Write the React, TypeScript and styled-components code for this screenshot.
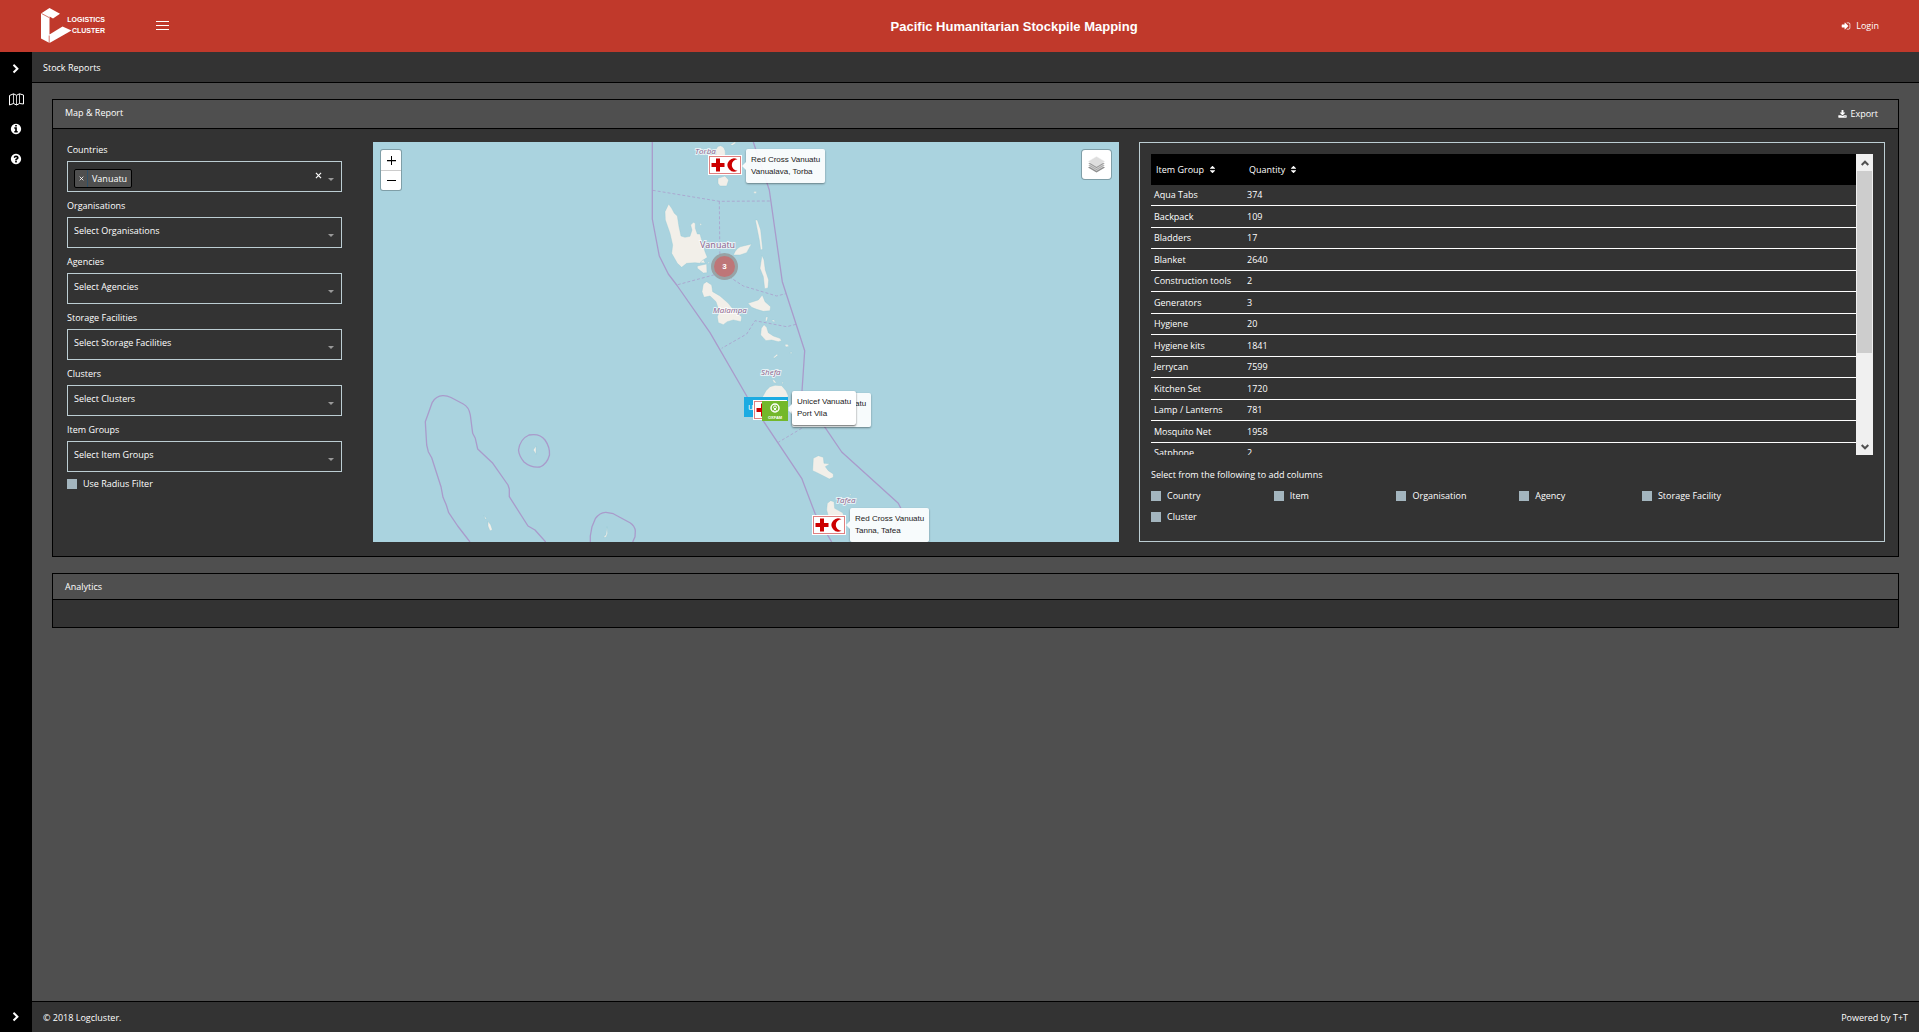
import React from 'react';
import styled, { createGlobalStyle } from 'styled-components';

const colors = {
  brand: '#c0392b',
  page: '#4f4f4f',
  panel: '#333333',
  line: '#000000',
  field: '#bccdd3',
  tick: '#a3b5be',
  water: '#aad3df',
  land: '#f2efe9',
  boundary: '#a99bcb',
};

const GlobalStyle = createGlobalStyle`
  *, *::before, *::after { box-sizing: border-box; }
  body {
    margin: 0;
    background: ${colors.page};
    color: #fff;
    font: 9px/16px 'Open Sans', 'Noto Sans', sans-serif;
  }
  button, select, input { font: inherit; color: inherit; }
  button { background: none; border: 0; padding: 0; cursor: pointer; }
  h1, h2, p { margin: 0; font: inherit; }
`;

/* ---------- icons ---------- */

const iconPaths = {
  chevron:
    'M1363 877l-742 742q-19 19-45 19t-45-19l-166-166q-19-19-19-45t19-45l531-531-531-531q-19-19-19-45t19-45l166-166q19-19 45-19t45 19l742 742q19 19 19 45t-19 45z',
  info:
    'M1152 1376v-160q0-14-9-23t-23-9h-96v-512q0-14-9-23t-23-9h-320q-14 0-23 9t-9 23v160q0 14 9 23t23 9h96v320h-96q-14 0-23 9t-9 23v160q0 14 9 23t23 9h448q14 0 23-9t9-23zm-128-896v-160q0-14-9-23t-23-9h-192q-14 0-23 9t-9 23v160q0 14 9 23t23 9h192q14 0 23-9t9-23zm640 416q0 209-103 385.5t-279.5 279.5-385.5 103-385.5-103-279.5-279.5-103-385.5 103-385.5 279.5-279.5 385.5-103 385.5 103 279.5 279.5 103 385.5z',
  question:
    'M1024 1376v-192q0-14-9-23t-23-9h-192q-14 0-23 9t-9 23v192q0 14 9 23t23 9h192q14 0 23-9t9-23zm256-672q0-88-55.5-163t-138.5-116-170-41q-243 0-371 213-15 24 8 42l132 100q7 6 19 6 16 0 25-12 53-68 86-92 34-24 86-24 48 0 85.5 26t37.5 59q0 38-20 61t-68 45q-63 28-115.5 86.5t-52.5 125.5v36q0 14 9 23t23 9h192q14 0 23-9t9-23q0-19 21.5-49.5t54.5-49.5q32-18 49-28.5t46-35 44.5-48 28-60.5 12.5-81zm384 192q0 209-103 385.5t-279.5 279.5-385.5 103-385.5-103-279.5-279.5-103-385.5 103-385.5 279.5-279.5 385.5-103 385.5 103 279.5 279.5 103 385.5z',
  download:
    'M1344 1344q0-26-19-45t-45-19-45 19-19 45 19 45 45 19 45-19 19-45zm256 0q0-26-19-45t-45-19-45 19-19 45 19 45 45 19 45-19 19-45zm128-224v320q0 40-28 68t-68 28h-1472q-40 0-68-28t-28-68v-320q0-40 28-68t68-28h465l135 136q58 56 136 56t136-56l136-136h464q40 0 68 28t28 68zm-325-569q17 41-14 70l-448 448q-18 19-45 19t-45-19l-448-448q-31-29-14-70 17-39 59-39h256v-448q0-26 19-45t45-19h256q26 0 45 19t19 45v448h256q42 0 59 39z',
  signIn:
    'M1312 896q0 26-19 45l-544 544q-19 19-45 19t-45-19-19-45v-288h-448q-26 0-45-19t-19-45v-384q0-26 19-45t45-19h448v-288q0-26 19-45t45-19 45 19l544 544q19 19 19 45zm352-352v704q0 119-84.5 203.5t-203.5 84.5h-320q-13 0-22.5-9.5t-9.5-22.5q0-4-1-20t-.5-26.5 3-23.5 10-19.5 20.5-6.5h320q66 0 113-47t47-113v-704q0-66-47-113t-113-47h-312l-11.5-1-11.5-3-8-5.5-7-9-2-13.5q0-4-1-20t-.5-26.5 3-23.5 10-19.5 20.5-6.5h320q119 0 203.5 84.5t84.5 203.5z',
  sort:
    'M1408 1088q0 26-19 45l-448 448q-19 19-45 19t-45-19l-448-448q-19-19-19-45t19-45 45-19h896q26 0 45 19t19 45zm0-384q0 26-19 45t-45 19h-896q-26 0-45-19t-19-45 19-45l448-448q19-19 45-19t45 19l448 448q19 19 19 45z',
};

const Icon = ({ name, size }: { name: keyof typeof iconPaths; size: number }) => (
  <svg width={size} height={size} viewBox="0 0 1792 1792" fill="currentColor" aria-hidden="true">
    <path d={iconPaths[name]} />
  </svg>
);

const MapIcon = () => (
  <svg width="15" height="13" viewBox="0 0 15 13" fill="none" stroke="#fff" strokeWidth="1" aria-hidden="true">
    <path d="M.5 2.500L4.500.800 7.500 2.300 10.500.800 14.500 2V11L10.500 10.500 7.500 12 4.500 10.500.500 12Z" strokeLinejoin="round" />
    <path d="M4.500 1V10.500M7.500 2.500V12M10.500 1V10.500" strokeWidth=".8" />
  </svg>
);

const CrossIcon = ({ size }: { size: number }) => (
  <svg width={size} height={size} viewBox="0 0 6 6" stroke="currentColor" strokeWidth="1" aria-hidden="true">
    <path d="M.8.800L5.200 5.200M5.200.800L.8 5.200" />
  </svg>
);

/* ---------- page frame ---------- */

const Page = styled.div`
  min-height: 100vh;
  display: flex;
  flex-direction: column;
`;

const TopBar = styled.header`
  height: 52px;
  background: ${colors.brand};
  display: flex;
  align-items: center;
  padding: 0 40px;
`;

const Brand = styled.div`
  display: flex;
  align-items: center;
  gap: 51px;
  padding-right: 18px;
`;

const Logo = styled.a`
  display: flex;
  align-items: center;
  color: #fff;
  text-decoration: none;
`;

const LogoText = styled.span`
  font: bold 7px/11px 'Liberation Sans Narrow', 'Liberation Sans', sans-serif;
  text-align: right;
  width: 38px;
  margin-left: -5px;
  padding-bottom: 2px;
`;

const MenuButton = styled.button`
  display: flex;
`;

const AppTitle = styled.h1`
  flex: 1;
  padding-top: 1px;
  text-align: center;
  font: bold 13px/20px 'Liberation Sans', Arial, sans-serif;
`;

const LoginLink = styled.a`
  display: flex;
  align-items: center;
  gap: 5px;
  color: #fff;
  text-decoration: none;
`;

const Shell = styled.div`
  flex: 1;
  display: flex;
`;

const SideBar = styled.nav`
  width: 32px;
  background: #000;
  display: flex;
  flex-direction: column;
  align-items: center;
  justify-content: space-between;
  padding: 2px 0 0;
`;

const SideGroup = styled.div`
  display: flex;
  flex-direction: column;
`;

const SideButton = styled.button`
  width: 32px;
  height: 30px;
  display: flex;
  align-items: center;
  justify-content: center;
`;

const Main = styled.div`
  flex: 1;
  min-width: 0;
  display: flex;
  flex-direction: column;
`;

const SubHeader = styled.div`
  height: 31px;
  padding: 1px 11px 0;
  display: flex;
  align-items: center;
  background: ${colors.panel};
  border-bottom: 1px solid ${colors.line};
`;

const Content = styled.main`
  flex: 1;
  padding: 16px 20px;
  display: flex;
  flex-direction: column;
  gap: 16px;
`;

const Footer = styled.footer`
  height: 31px;
  padding: 1px 11px 0;
  display: flex;
  align-items: center;
  justify-content: space-between;
  background: ${colors.panel};
  border-top: 1px solid ${colors.line};
`;

const Panel = styled.section`
  border: 1px solid ${colors.line};
  background: ${colors.panel};
`;

const PanelHead = styled.div`
  padding: 0 20px 0 12px;
  display: flex;
  align-items: flex-start;
  justify-content: space-between;
  background: ${colors.page};
  border-bottom: 1px solid ${colors.line};
`;

const PanelTitle = styled.h2`
  line-height: 25px;
`;

const ExportButton = styled.button`
  height: 28px;
  display: flex;
  align-items: center;
  gap: 3px;
`;

const PanelBody = styled.div`
  display: grid;
  grid-template-columns: minmax(0, 286px) minmax(0, 1fr) minmax(0, 1fr);
  gap: 20px;
  padding: 13px 13px 14px 14px;
`;

const EmptyBody = styled.div`
  height: 27px;
`;

/* ---------- filters ---------- */

const Filters = styled.form`
  display: flex;
  flex-direction: column;
  padding-right: 11px;
`;

const FilterLabel = styled.label`
  height: 16px;
  line-height: 15px;
  margin-bottom: 3px;
`;

const SelectShell = styled.div`
  position: relative;
  height: 31px;
  margin-bottom: 6px;
  display: flex;
  align-items: center;
  border: 1px solid ${colors.field};

  &::after {
    content: '';
    position: absolute;
    right: 7px;
    top: 16px;
    border: 3px solid transparent;
    border-top-color: #999;
    border-bottom: 0;
    pointer-events: none;
  }
`;

const Select = styled.select`
  appearance: none;
  flex: 1;
  min-width: 0;
  height: 100%;
  padding: 0 16px 4px 6px;
  background: transparent;
  border: 0;
  outline: 0;

  option { background: ${colors.panel}; }
`;

const Tag = styled.span`
  height: 19px;
  margin: 3px 0 0 6px;
  display: flex;
  align-items: center;
  background: ${colors.page};
  border: 1px solid #000;
  border-radius: 2px;
`;

const TagRemove = styled.button`
  width: 13px;
  height: 17px;
  display: flex;
  align-items: center;
  justify-content: center;
  border-right: 1px solid #2f5068;
`;

const TagText = styled.span`
  padding: 2px 4px 0;
`;

const ClearButton = styled.button`
  height: 16px;
  margin: 0 19px 2px 0;
  display: flex;
  align-items: center;
`;

const Check = styled.label`
  display: flex;
  align-items: center;
  gap: 6px;
  height: 12px;
  line-height: 12px;
`;

const CheckBox = styled.input`
  appearance: none;
  width: 10px;
  height: 10px;
  margin: 0;
  background: ${colors.tick};

  &:checked { box-shadow: inset 0 0 0 3px #fff; }
`;

const filterNames = ['Organisations', 'Agencies', 'Storage Facilities', 'Clusters', 'Item Groups'];

const FilterForm = () => (
  <Filters>
    <FilterLabel htmlFor="countries">Countries</FilterLabel>
    <SelectShell>
      <Tag>
        <TagRemove type="button" aria-label="Remove"><CrossIcon size={5} /></TagRemove>
        <TagText>Vanuatu</TagText>
      </Tag>
      <Select id="countries" defaultValue=""><option value="" /></Select>
      <ClearButton type="button" aria-label="Clear"><CrossIcon size={7} /></ClearButton>
    </SelectShell>
    {filterNames.map((name) => (
      <React.Fragment key={name}>
        <FilterLabel htmlFor={name}>{name}</FilterLabel>
        <SelectShell>
          <Select id={name}><option>Select {name}</option></Select>
        </SelectShell>
      </React.Fragment>
    ))}
    <Check><CheckBox type="checkbox" />Use Radius Filter</Check>
  </Filters>
);

/* ---------- map ---------- */

const MapFrame = styled.div`
  position: relative;
  height: 400px;
  overflow: hidden;
  background: ${colors.water};
`;

const MapCanvas = styled.div`
  position: absolute;
  top: 0;
  left: 50%;
  width: 746px;
  height: 400px;
  margin-left: -373px;
`;

const MapDrawing = styled.svg`
  display: block;

  text {
    fill: #8d618b;
    stroke: #fff;
    stroke-width: 2px;
    stroke-opacity: 0.7;
    paint-order: stroke;
    font: italic 8px 'Open Sans', 'Noto Sans', sans-serif;
  }
  .country {
    font: 9px 'Open Sans', 'Noto Sans', sans-serif;
  }
`;

const Pin = styled.div<{ $x: number; $y: number }>`
  position: absolute;
  left: ${(p) => p.$x}px;
  top: ${(p) => p.$y}px;
  display: flex;
`;

const Cluster = styled.button`
  width: 27px;
  height: 27px;
  border-radius: 50%;
  border: 3px solid #98a3a6;
  background: #be7678;
  color: #fff;
  font: bold 8px/12px 'Liberation Sans', Arial, sans-serif;
`;

const UnicefBadge = styled.div`
  width: 44px;
  height: 20px;
  padding: 2px 4px;
  background: #1cabe2;
  color: #fff;
`;

const Callout = styled.div<{ $solid?: boolean }>`
  position: relative;
  padding: 5px;
  border-radius: 2px;
  background: ${(p) => (p.$solid ? '#fff' : 'rgba(255, 255, 255, 0.9)')};
  box-shadow: 0 1px 2px rgba(0, 0, 0, ${(p) => (p.$solid ? 0.6 : 0.4)});
  color: #222;
  white-space: nowrap;
  font: 8px/12px 'Liberation Sans', Arial, sans-serif;

  &::before {
    content: '';
    position: absolute;
    left: -4px;
    top: 13px;
    border: 4px solid transparent;
    border-left: 0;
    border-right-color: #f8fbfc;
  }
`;

const MapButtons = styled.div`
  position: absolute;
  left: 8px;
  top: 8px;
  width: 20px;
  background: #fff;
  border-radius: 2px;
  box-shadow: 0 0 0 1px rgba(0, 0, 0, 0.25);
`;

const ZoomButton = styled.button`
  width: 20px;
  height: 20px;
  display: flex;
  align-items: center;
  justify-content: center;

  & + & { border-top: 1px solid #ccc; }
`;

const LayersButton = styled.button`
  position: absolute;
  right: 8px;
  top: 8px;
  width: 29px;
  height: 29px;
  display: flex;
  align-items: center;
  justify-content: center;
  background: #fff;
  border-radius: 3px;
  box-shadow: 0 0 0 1px rgba(0, 0, 0, 0.25);
`;

const RedCross = () => (
  <svg width="34" height="20" viewBox="0 0 34 20" aria-hidden="true">
    <rect width="34" height="20" fill="#fff" />
    <rect x="1.500" y="1.500" width="31" height="17" fill="#fff" stroke="#e08080" />
    <path d="M8 3.500h4v4.500h4.500v4H12v4.500H8V12H3.500V8H8z" fill="#c00" />
    <path d="M29.500 4.300A6.600 6.600 0 1 0 29.500 15.700A5.200 5.200 0 1 1 29.500 4.300Z" fill="#c00" />
  </svg>
);

const Oxfam = () => (
  <svg width="26" height="20" viewBox="0 0 26 20" role="img" aria-label="Oxfam">
    <rect width="26" height="20" fill="#73b82b" />
    <circle cx="13" cy="7" r="4" fill="none" stroke="#fff" strokeWidth="1.500" />
    <circle cx="13" cy="6.300" r="1.400" fill="none" stroke="#fff" strokeWidth="1" />
    <path d="M11.500 9.800L13 7.800 14.500 9.800" fill="none" stroke="#fff" strokeWidth="1" />
    <text x="13" y="17.500" fill="#fff" textAnchor="middle" fontFamily="Liberation Sans" fontWeight="bold" fontSize="4">OXFAM</text>
  </svg>
);

const Islands = () => (
  <MapDrawing width="746" height="400" viewBox="0 0 746 400" aria-hidden="true">
    <g fill="none" stroke={colors.boundary} strokeWidth="1.300" strokeLinejoin="round">
      <path d="M279.300 0V77L286.300 114 295.300 132 303.700 143 337 190.700 374.300 255 428.700 336.300 442 371.300 458.700 400" />
      <path d="M380.300 0L396.300 48 409.300 139.700 425 188 431.700 208.700 429 249 430 255 452.700 286.300 468.700 310 525.300 361.300 528.700 368 517 400" />
      <path d="M97 400L84.700 384 75.700 370.700 73.300 363 70 355.300 68 344.700 58.700 315.700 55.300 309.700 53.700 303 52.300 279.700 59.300 260.300Q63 254 69.700 253.700Q74 253.500 78 255.500L90.300 262Q96 265 97.300 273L99.700 291.300 102.300 296.300 104.700 307 119.300 320.700 135 343 136.300 347V354.700L155 384 162 388 172.700 400" />
      <path d="M145.500 308Q147 297 156 293Q167 291 172 298Q177 305 176.500 313Q174 322 167 325Q158 326 151 320Q146 314 145.500 308Z" />
      <path d="M217.300 400V394L219 384.700 222.300 376.700Q227 370 233 370.300L240.300 371.700 257 380.700Q262 384 262.300 389L262 394.700 259.700 400" />
      <g strokeDasharray="3 2" strokeWidth="1" opacity=".75">
        <path d="M279.700 48.300L346.300 59.300 397 59M346.300 59.300L347 125M304.700 142.700L346 131.500M352 132L370.300 144 403.700 154 412.700 151.700M423 182.300L413.700 184.700 382 178.700 373.700 192 348.700 206.300M428.700 286.300L405.300 300.300" />
      </g>
    </g>
    <g fill={colors.land} stroke="#8cc4d0" strokeWidth="1" strokeLinejoin="round">
      <g transform="translate(267 -12) scale(.3333)">
        <path d="M86 222L95 235 103 250 112 258 117 290 123 318 135 322 150 319 156 300 152 285 160 277 166 280 166 295 172 312 180 312 188 340 195 365 202 382 190 390 182 400 165 398 140 400 125 412 112 400 95 370 98 345 90 310 76 270 75 245Z" />
        <path d="M172 408L200 402 201 428 190 429 172 415ZM180 398L190 389 196 399ZM178 280L186 282 182 287ZM203 397L208 396 207 401Z" />
        <path d="M280 375Q290 350 310 348L335 342 330 350 320 368 300 375Z" />
        <path d="M346 270L352 270 362 300 368 358 362 360 358 330 352 300Z" />
        <path d="M366 376L372 390 376 420 386 450 384 474 374 476 370 440 360 415Z" />
        <path d="M190 462L200 455 215 465 218 485 240 498 265 520 285 545 305 560 303 575 290 572 280 570 262 575 250 584 235 578 232 560 238 545 228 515 210 498 192 502 186 485Z" />
        <path d="M324 520L355 510 367 495 375 515 392 530 390 542 370 544 350 538 335 532Z" />
        <path d="M378 560L384 562 380 574 376 572ZM395 571Q400 568 406 573 400 578 395 571Z" />
        <path d="M228 70Q226 48 242 47Q256 52 256 70V82H228ZM234 145L255 138 266 150 260 168 240 168 234 160ZM270 44L284 36 289 38 278 46ZM340 187Q345 181 351 187 345 194 340 187Z" />
      </g>
      <g transform="translate(267 178) scale(.3333)">
        <path d="M372 14L380 22 385 38 400 48 420 55 425 62 415 65 395 60 378 62 362 45 364 25Z" />
        <path d="M434 76Q440 69 447 77 440 85 434 76ZM448 98L456 96 455 101ZM400 112L410 103 415 105 402 115ZM396 178L403 180 410 190 402 188ZM424 188L430 186 429 192Z" />
        <path d="M368 230L378 212 390 200 405 196 425 197 438 212 445 228 440 240H372Z" />
        <path d="M520 415L535 407 550 412 552 430 570 431 556 440 565 452 580 462 580 472 568 477 545 465 525 455 518 452Z" />
        <path d="M562 550L572 542 582 545 584 565 608 578 612 588H565L560 570ZM627 526L631 521 634 526Z" />
      </g>
      <g transform="translate(-3 -12) scale(.3333)">
        <path d="M498 948L490 960 498 973ZM342 1156L350 1166 346 1168ZM354 1174L362 1184 367 1199 360 1203 354 1188ZM711 1190L713 1210 708 1222 700 1222 708 1214Z" />
      </g>
    </g>
    <text x="322" y="12">Torba</text>
    <text className="country" x="327" y="106">Vanuatu</text>
    <text x="340" y="171">Malampa</text>
    <text x="388" y="233">Shefa</text>
    <text x="463" y="361">Tafea</text>
  </MapDrawing>
);

const StockMap = () => (
  <MapFrame>
    <MapCanvas>
      <Islands />
      <Pin $x={335} $y={13}><RedCross /></Pin>
      <Pin $x={439} $y={373}><RedCross /></Pin>
      <Pin $x={338} $y={111}><Cluster type="button">3</Cluster></Pin>
      <Pin $x={371} $y={255}><UnicefBadge>unicef</UnicefBadge></Pin>
      <Pin $x={380} $y={258}><RedCross /></Pin>
      <Pin $x={389} $y={259}><Oxfam /></Pin>
      <Pin $x={373} $y={7}><Callout>Red Cross Vanuatu<br />Vanualava, Torba</Callout></Pin>
      <Pin $x={477} $y={366}><Callout>Red Cross Vanuatu<br />Tanna, Tafea</Callout></Pin>
      <Pin $x={419} $y={251}><Callout>Red Cross Vanuatu<br />Port Vila</Callout></Pin>
      <Pin $x={419} $y={249}><Callout $solid>Unicef Vanuatu<br />Port Vila</Callout></Pin>
    </MapCanvas>
    <MapButtons>
      <ZoomButton type="button" aria-label="Zoom in">
        <svg width="9" height="9" viewBox="0 0 9 9" fill="#000"><path d="M0 4h9v1H0zM4 0h1v9H4z" /><path d="M0 4h9v1.500H0z" opacity=".5" /></svg>
      </ZoomButton>
      <ZoomButton type="button" aria-label="Zoom out">
        <svg width="9" height="9" viewBox="0 0 9 9" fill="#000"><path d="M0 4h9v1H0z" /></svg>
      </ZoomButton>
    </MapButtons>
    <LayersButton type="button" aria-label="Layers">
      <svg width="17" height="17" viewBox="0 0 17 17">
        <path d="M0 11.500L8.500 7 17 11.500 8.500 16.500Z" fill="#8f8f8f" />
        <path d="M0 9.500L8.500 5 17 9.500 8.500 14.500Z" fill="#a9a9a9" stroke="#fff" strokeWidth=".5" />
        <path d="M0 7.500L8.500 3 17 7.500 8.500 12.500Z" fill="#999" stroke="#fff" strokeWidth=".5" />
        <path d="M0 5.500L8.500.500 17 5.500 8.500 10.500Z" fill="#dedede" stroke="#f4f4f4" strokeWidth=".5" />
      </svg>
    </LayersButton>
  </MapFrame>
);

/* ---------- report ---------- */

const Report = styled.div`
  padding: 11px;
  border: 1px solid ${colors.field};
`;

const TableArea = styled.div`
  height: 301px;
  display: flex;
`;

const TableClip = styled.div`
  flex: 1;
  overflow: hidden;
`;

const Table = styled.table`
  width: 100%;
  border-collapse: separate;
  border-spacing: 0;
  table-layout: fixed;

  th {
    height: 31px;
    padding: 0 0 0 5px;
    background: #000;
    text-align: left;
    font-weight: 400;
  }
  th:first-child { width: 93px; }
  td {
    height: 22px;
    padding: 0 0 0 3px;
    border-bottom: 1px solid #fff;
    white-space: nowrap;
  }
  tr:nth-child(odd) td { height: 21px; }
`;

const SortButton = styled.button`
  display: flex;
  align-items: center;
  gap: 4px;
`;

const ScrollTrack = styled.div`
  width: 17px;
  display: flex;
  flex-direction: column;
  background: #f0f0f0;
`;

const ScrollArrow = styled.button`
  height: 17px;
  display: flex;
  align-items: center;
  justify-content: center;
`;

const ScrollRun = styled.div`
  flex: 1;
  padding: 0 1px;
`;

const ScrollThumb = styled.div`
  height: 68%;
  background: #cdcdcd;
`;

const ColumnPicker = styled.fieldset`
  margin: 12px 0 0;
  padding: 0;
  border: 0;

  legend { padding: 0; margin-bottom: 7px; }
`;

const ColumnGrid = styled.div`
  display: grid;
  grid-template-columns: repeat(5, 17%);
  row-gap: 9px;
`;

const stock: [string, number][] = [
  ['Aqua Tabs', 374],
  ['Backpack', 109],
  ['Bladders', 17],
  ['Blanket', 2640],
  ['Construction tools', 2],
  ['Generators', 3],
  ['Hygiene', 20],
  ['Hygiene kits', 1841],
  ['Jerrycan', 7599],
  ['Kitchen Set', 1720],
  ['Lamp / Lanterns', 781],
  ['Mosquito Net', 1958],
  ['Satphone', 2],
];

const extraColumns = ['Country', 'Item', 'Organisation', 'Agency', 'Storage Facility', 'Cluster'];

const StockReport = () => (
  <Report>
    <TableArea>
      <TableClip>
        <Table>
          <thead>
            <tr>
              {['Item Group', 'Quantity'].map((head) => (
                <th key={head} scope="col">
                  <SortButton type="button">{head}<Icon name="sort" size={9} /></SortButton>
                </th>
              ))}
            </tr>
          </thead>
          <tbody>
            {stock.map(([item, quantity]) => (
              <tr key={item}><td>{item}</td><td>{quantity}</td></tr>
            ))}
          </tbody>
        </Table>
      </TableClip>
      <ScrollTrack>
        <ScrollArrow type="button" aria-label="Scroll up">
          <svg width="8" height="6" viewBox="0 0 8 6" fill="none" stroke="#505050" strokeWidth="2"><path d="M.7 5L4 1.700 7.300 5" /></svg>
        </ScrollArrow>
        <ScrollRun><ScrollThumb /></ScrollRun>
        <ScrollArrow type="button" aria-label="Scroll down">
          <svg width="8" height="6" viewBox="0 0 8 6" fill="none" stroke="#505050" strokeWidth="2"><path d="M.7 1L4 4.300 7.300 1" /></svg>
        </ScrollArrow>
      </ScrollTrack>
    </TableArea>
    <ColumnPicker>
      <legend>Select from the following to add columns</legend>
      <ColumnGrid>
        {extraColumns.map((name) => (
          <Check key={name}><CheckBox type="checkbox" />{name}</Check>
        ))}
      </ColumnGrid>
    </ColumnPicker>
  </Report>
);

/* ---------- app ---------- */

export default function App() {
  return (
    <Page>
      <GlobalStyle />
      <TopBar>
        <Brand>
          <Logo href="#">
            <svg width="32" height="36" viewBox="0 0 32 36" fill="#fff" aria-hidden="true">
              <path d="M1 5.500L9.500 0 20 5.800 13 10.500 9.500 8.500V26.500L22.500 18.500 31.500 22.500 9.500 35 1 30.500Z" />
              <path d="M1.500 5.500L9 9.500M9.200 27.500V35" stroke={colors.brand} strokeWidth=".7" fill="none" />
            </svg>
            <LogoText>LOGISTICS CLUSTER</LogoText>
          </Logo>
          <MenuButton type="button" aria-label="Menu">
            <svg width="13" height="10" viewBox="0 0 13 10" fill="#fff"><path d="M0 0h13v1H0zM0 4h13v1H0zM0 8h13v1H0z" /></svg>
          </MenuButton>
        </Brand>
        <AppTitle>Pacific Humanitarian Stockpile Mapping</AppTitle>
        <LoginLink href="#"><Icon name="signIn" size={10} />Login</LoginLink>
      </TopBar>
      <Shell>
        <SideBar>
          <SideGroup>
            <SideButton type="button" aria-label="Expand"><Icon name="chevron" size={10} /></SideButton>
            <SideButton type="button" aria-label="Map"><MapIcon /></SideButton>
            <SideButton type="button" aria-label="About"><Icon name="info" size={12} /></SideButton>
            <SideButton type="button" aria-label="Help"><Icon name="question" size={12} /></SideButton>
          </SideGroup>
          <SideButton type="button" aria-label="Expand footer"><Icon name="chevron" size={10} /></SideButton>
        </SideBar>
        <Main>
          <SubHeader>Stock Reports</SubHeader>
          <Content>
            <Panel>
              <PanelHead>
                <PanelTitle>Map &amp; Report</PanelTitle>
                <ExportButton type="button"><Icon name="download" size={9} />Export</ExportButton>
              </PanelHead>
              <PanelBody>
                <FilterForm />
                <StockMap />
                <StockReport />
              </PanelBody>
            </Panel>
            <Panel>
              <PanelHead><PanelTitle>Analytics</PanelTitle></PanelHead>
              <EmptyBody />
            </Panel>
          </Content>
          <Footer><span>© 2018 Logcluster.</span><span>Powered by T+T</span></Footer>
        </Main>
      </Shell>
    </Page>
  );
}
